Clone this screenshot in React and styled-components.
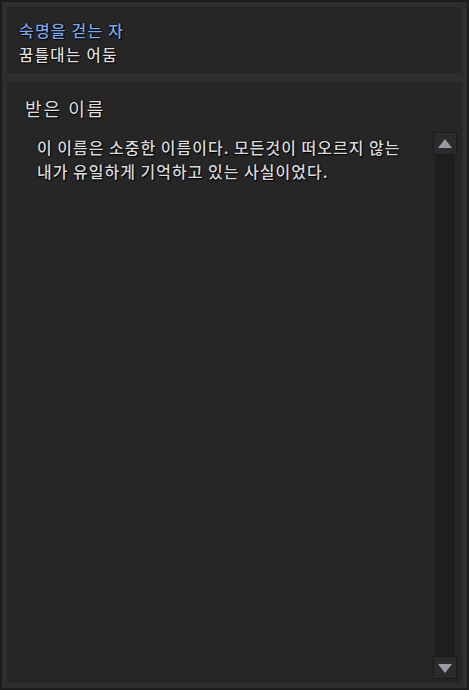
import React from "react";
import styled, { createGlobalStyle } from "styled-components";

const Global = createGlobalStyle`
  html, body { margin: 0; padding: 0; background: #1b1b1b; }
  * { box-sizing: border-box; }
`;

const Frame = styled.div`
  width: 469px;
  height: 690px;
  background: #2e2e2e;
  border: 2px solid #1c1c1c;
  padding: 5px 5px 5px 5px;
  display: flex;
  flex-direction: column;
  gap: 9px;
  font-family: "Noto Sans CJK KR", "Noto Sans", sans-serif;
`;

const Panel = styled.section`
  background: #262626;
  display: flex;
  flex-direction: column;
`;

const Header = styled(Panel)`
  height: 66px;
  padding: 12px 12px 0 12px;
  gap: 2px;
`;

const Body = styled(Panel)`
  flex: 1;
  min-height: 0;
  padding: 12px 5px 4px 18px;
`;

const Shadowed = styled.div`
  text-shadow: 1px 1px 1px #000, 0 0 2px #000;
  white-space: nowrap;
  font-weight: 500;
`;

const Name = styled(Shadowed)`
  color: #78a8ea;
  font-size: 16px;
  line-height: 22px;
  letter-spacing: 1.2px;
`;

const Subtitle = styled(Shadowed)`
  color: #dedede;
  font-size: 15.5px;
  line-height: 22px;
  letter-spacing: 1.4px;
`;

const Title = styled(Shadowed)`
  color: #e0e0e0;
  font-size: 18px;
  font-weight: 400;
  line-height: 28px;
  letter-spacing: 2px;
`;

const ContentRow = styled.div`
  flex: 1;
  min-height: 0;
  display: flex;
  margin-top: 10px;
`;

const Text = styled.p`
  flex: 1;
  margin: 0;
  padding: 3px 0 0 12px;
  color: #dadada;
  font-size: 16px;
  font-weight: 500;
  line-height: 24px;
  letter-spacing: 1px;
  white-space: nowrap;
  text-shadow: 1px 1px 1px #000, 0 0 2px #000;
`;

const Scrollbar = styled.div`
  width: 24px;
  display: flex;
  flex-direction: column;
  align-items: center;
`;

const ScrollButton = styled.div`
  width: 24px;
  height: 23px;
  background: #2b2b2d;
  border: 1px solid #1a1a1a;
  display: flex;
  align-items: center;
  justify-content: center;
`;

const Track = styled.div`
  flex: 1;
  width: 20px;
  background: #1e1e1e;
`;

const Arrow = ({ down }) => (
  <svg width="16" height="12" viewBox="0 0 16 12">
    <polygon
      points={down ? "1,2 15,2 8,11" : "1,10 15,10 8,1"}
      fill="#9c9ba3"
    />
  </svg>
);

export default function App() {
  return (
    <>
      <Global />
      <Frame>
        <Header>
          <Name>숙명을 걷는 자</Name>
          <Subtitle>꿈틀대는 어둠</Subtitle>
        </Header>
        <Body>
          <Title>받은 이름</Title>
          <ContentRow>
            <Text>
              이 이름은 소중한 이름이다. 모든것이 떠오르지 않는
              <br />
              내가 유일하게 기억하고 있는 사실이었다.
            </Text>
            <Scrollbar>
              <ScrollButton>
                <Arrow />
              </ScrollButton>
              <Track />
              <ScrollButton>
                <Arrow down />
              </ScrollButton>
            </Scrollbar>
          </ContentRow>
        </Body>
      </Frame>
    </>
  );
}
